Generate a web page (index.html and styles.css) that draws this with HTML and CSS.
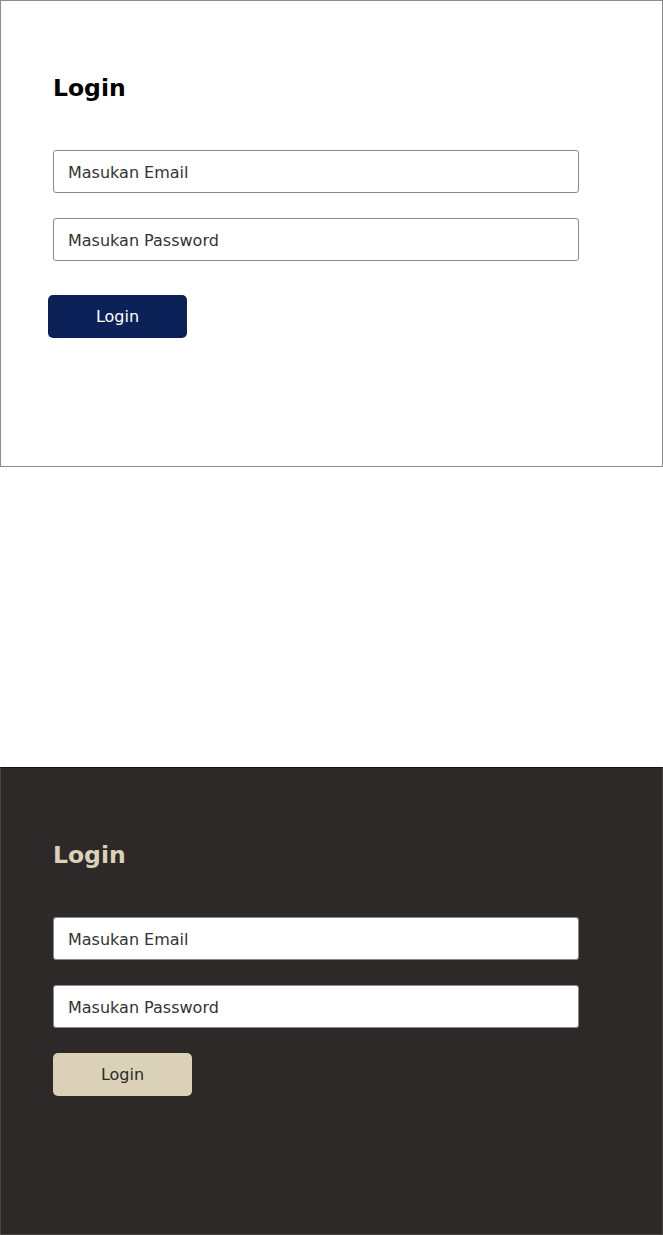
FILE: index.html
```html
<!DOCTYPE html>
<html lang="id">
<head>
<meta charset="utf-8">
<title>Login</title>
<link rel="stylesheet" href="styles.css">
</head>
<body>
<section class="panel panel-light">
  <h1 class="title">Login</h1>
  <form class="form">
    <input class="field" type="email" placeholder="Masukan Email">
    <input class="field" type="password" placeholder="Masukan Password">
    <button class="btn btn-navy" type="button">Login</button>
  </form>
</section>
<div class="spacer"></div>
<section class="panel panel-dark">
  <h1 class="title">Login</h1>
  <form class="form">
    <input class="field" type="email" placeholder="Masukan Email">
    <input class="field" type="password" placeholder="Masukan Password">
    <button class="btn btn-sand" type="button">Login</button>
  </form>
</section>
</body>
</html>
```
FILE: styles.css
```css
* { box-sizing: border-box; }
html, body { margin: 0; padding: 0; background: #ffffff; }
body { font-family: "DejaVu Sans", "Open Sans", sans-serif; }

.panel {
  width: 663px;
  height: 467px;
  padding: 73px 0 0 52px;
  border: 1px solid #8c8c8c;
}
.panel-light { background: #ffffff; }
.panel-dark {
  height: 468px;
  background: #2d2928;
  border-color: #4a4646;
  border-top-color: #151313;
}
.spacer { height: 300px; }

.title {
  margin: 0;
  font-size: 23.5px;
  line-height: 28px;
  font-weight: 700;
  color: #000;
}
.panel-dark .title { color: #dcd1b8; }

.form {
  display: flex;
  flex-direction: column;
  align-items: flex-start;
  gap: 25px;
  margin-top: 48px;
}

.field {
  width: 526px;
  height: 43px;
  margin: 0;
  padding: 1px 14px 0;
  border: 1px solid #8a8a8a;
  border-radius: 3px;
  background: #fff;
  font-family: "DejaVu Sans", sans-serif;
  font-size: 16px;
  color: #333;
  outline: none;
}
.field::placeholder { color: #333; opacity: 1; }

.btn {
  width: 139px;
  height: 43px;
  border: none;
  border-radius: 5px;
  font-family: "DejaVu Sans", sans-serif;
  font-size: 16px;
  cursor: pointer;
}
.btn-navy {
  background: #0d2159;
  color: #fff;
  margin-top: 9px;
  margin-left: -5px;
}
.btn-sand {
  background: #dbd0b8;
  color: #2a2a2a;
}
```
